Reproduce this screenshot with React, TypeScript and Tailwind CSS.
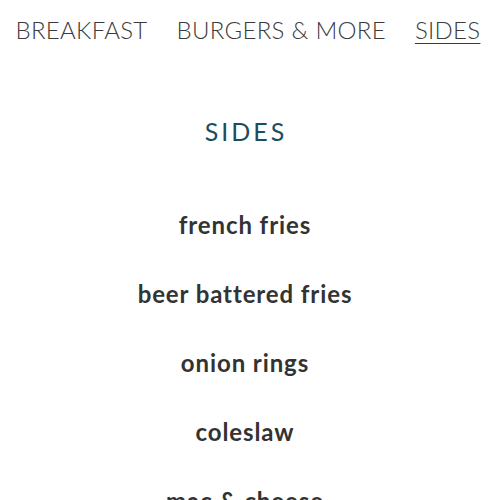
const navItems = [
  { label: 'BREAKFAST', active: false },
  { label: 'BURGERS & MORE', active: false },
  { label: 'SIDES', active: true },
];

const sides = ['french fries', 'beer battered fries', 'onion rings', 'coleslaw', 'mac & cheese'];

export default function App() {
  return (
    <div className="w-[500px] h-[500px] overflow-hidden bg-white" style={{ fontFamily: 'Lato, "Open Sans", sans-serif' }}>
      {/* Category nav */}
      <nav className="flex justify-center gap-[29px] pt-[14px] pr-[4px] h-[60px]">
        {navItems.map((item) => (
          <a
            key={item.label}
            href="#"
            className={`text-[24px] font-light leading-[32px] text-[#3b3b3b] tracking-[0.3px] ${
              item.active ? 'underline underline-offset-[4px] decoration-1' : ''
            }`}
          >
            {item.label}
          </a>
        ))}
      </nav>

      {/* Section title */}
      <h2 className="mt-[55px] pr-[8px] text-center text-[25px] leading-[32px] text-[#1d4d5e] tracking-[3px]">
        SIDES
      </h2>

      {/* Items */}
      <ul className="mt-[62px] pr-[10px] flex flex-col items-center gap-[37px]">
        {sides.map((s) => (
          <li key={s} className="text-[24px] font-bold leading-[32px] text-[#333] tracking-[0.9px]">
            {s}
          </li>
        ))}
      </ul>
    </div>
  );
}
